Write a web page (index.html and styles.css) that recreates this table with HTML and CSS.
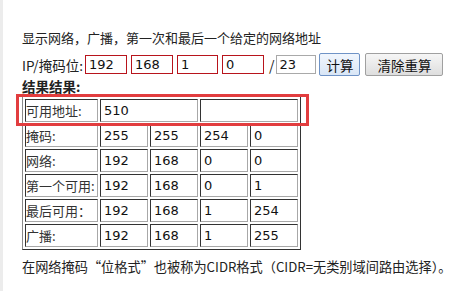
FILE: index.html
```html
<!DOCTYPE html>
<html lang="zh-CN">
<head>
    <meta charset="UTF-8">
    <title>IP 子网计算</title>
    <link rel="stylesheet" href="styles.css">
</head>
<body>
    <div class="page">
        <p class="intro">显示网络，广播，第一次和最后一个给定的网络地址</p>
        <form class="calc-row">
            <label>IP/掩码位:</label>
            <input class="octet" type="text" value="192">
            <input class="octet" type="text" value="168">
            <input class="octet" type="text" value="1">
            <input class="octet" type="text" value="0">
            <span class="slash">/</span>
            <input class="mask" type="text" value="23">
            <button type="button" class="btn btn-go">计算</button>
            <button type="button" class="btn">清除重算</button>
        </form>
        <div class="result-title">结果结果:</div>
        <div class="result-wrap">
            <table class="result">
                <colgroup>
                    <col class="col-label">
                    <col><col><col><col>
                </colgroup>
                <tr>
                    <td class="label">可用地址:</td>
                    <td colspan="2">510</td>
                    <td colspan="2"></td>
                </tr>
                <tr>
                    <td class="label">掩码:</td>
                    <td>255</td><td>255</td><td>254</td><td>0</td>
                </tr>
                <tr>
                    <td class="label">网络:</td>
                    <td>192</td><td>168</td><td>0</td><td>0</td>
                </tr>
                <tr>
                    <td class="label">第一个可用:</td>
                    <td>192</td><td>168</td><td>0</td><td>1</td>
                </tr>
                <tr>
                    <td class="label">最后可用：</td>
                    <td>192</td><td>168</td><td>1</td><td>254</td>
                </tr>
                <tr>
                    <td class="label">广播:</td>
                    <td>192</td><td>168</td><td>1</td><td>255</td>
                </tr>
            </table>
            <!-- highlight round the first result row -->
            <div class="mark"></div>
        </div>
        <p class="note">在网络掩码“位格式”也被称为CIDR格式（CIDR=无类别域间路由选择）。</p>
    </div>
</body>
</html>
```

FILE: styles.css
```css
body {
    margin: 0;
    background: #fff;
    font-family: "Noto Sans CJK SC", "DejaVu Sans", sans-serif;
    color: #222;
}
.page {
    border-left: 3px solid #ececec;
    padding: 28px 0 0 19px;
    height: 263px;
}
.intro {
    margin: 0;
    font-size: 13px;
    line-height: 20px;
    color: #222;
}
.calc-row {
    display: flex;
    align-items: center;
    margin-top: 5px;
    height: 23px;
}
.calc-row label {
    font-size: 13.5px;
    margin-right: 2px;
}
.octet, .mask {
    box-sizing: border-box;
    width: 42px;
    height: 19px;
    margin: 0 4px 0 0;
    padding: 0 3px;
    border: 1px solid #b8141c;
    font-family: "DejaVu Sans", sans-serif;
    font-size: 13px;
    color: #111;
}
.octet:nth-of-type(3) { width: 41px; }
.slash {
    font-size: 14px;
    margin: 0 2px 0 1px;
}
.mask {
    width: 40px;
    margin-right: 3px;
    border-color: #a9a9a9;
    padding-left: 2px;
}
.btn {
    box-sizing: border-box;
    height: 23px;
    padding: 0 10px;
    border: 1px solid #a0a0a0;
    border-radius: 2px;
    background: linear-gradient(#f6f6f6, #dedede);
    font-family: "Noto Sans CJK SC", sans-serif;
    font-size: 13.5px;
    color: #111;
}
.btn-go {
    width: 41px;
    padding: 0;
    margin-right: 5px;
    border-color: #6f93c6;
    background: linear-gradient(#f1f6fd, #d9e6f6);
}
.btn:last-child {
    width: 78px;
    padding: 0;
}
.result-title {
    margin-top: 1px;
    font-size: 13.5px;
    font-weight: bold;
    line-height: 18px;
}
.result-wrap {
    position: relative;
    width: 279px;
    margin-top: 1px;
}
.result {
    table-layout: fixed;
    width: 279px;
    border-collapse: separate;
    border-spacing: 2px;
    border: 1px solid;
    border-color: #8a8a8a #333 #333 #8a8a8a;
}
.col-label { width: 73px; }
.result td {
    height: 21px;
    padding: 0 0 0 3px;
    border: 1px solid;
    border-color: #333 #a8a8a8 #a8a8a8 #333;
    font-family: "DejaVu Sans", sans-serif;
    font-size: 13px;
    color: #111;
    white-space: nowrap;
    overflow: hidden;
}
.result td.label {
    padding-left: 0;
    font-family: "Noto Sans CJK SC", sans-serif;
    font-size: 13px;
    color: #333;
}
.mark {
    position: absolute;
    left: -6px;
    top: -2px;
    width: 287px;
    height: 26px;
    border: 3px solid #e23d3f;
}
.note {
    margin: 8px 0 0;
    font-size: 13.2px;
    line-height: 18px;
    color: #222;
}
```
